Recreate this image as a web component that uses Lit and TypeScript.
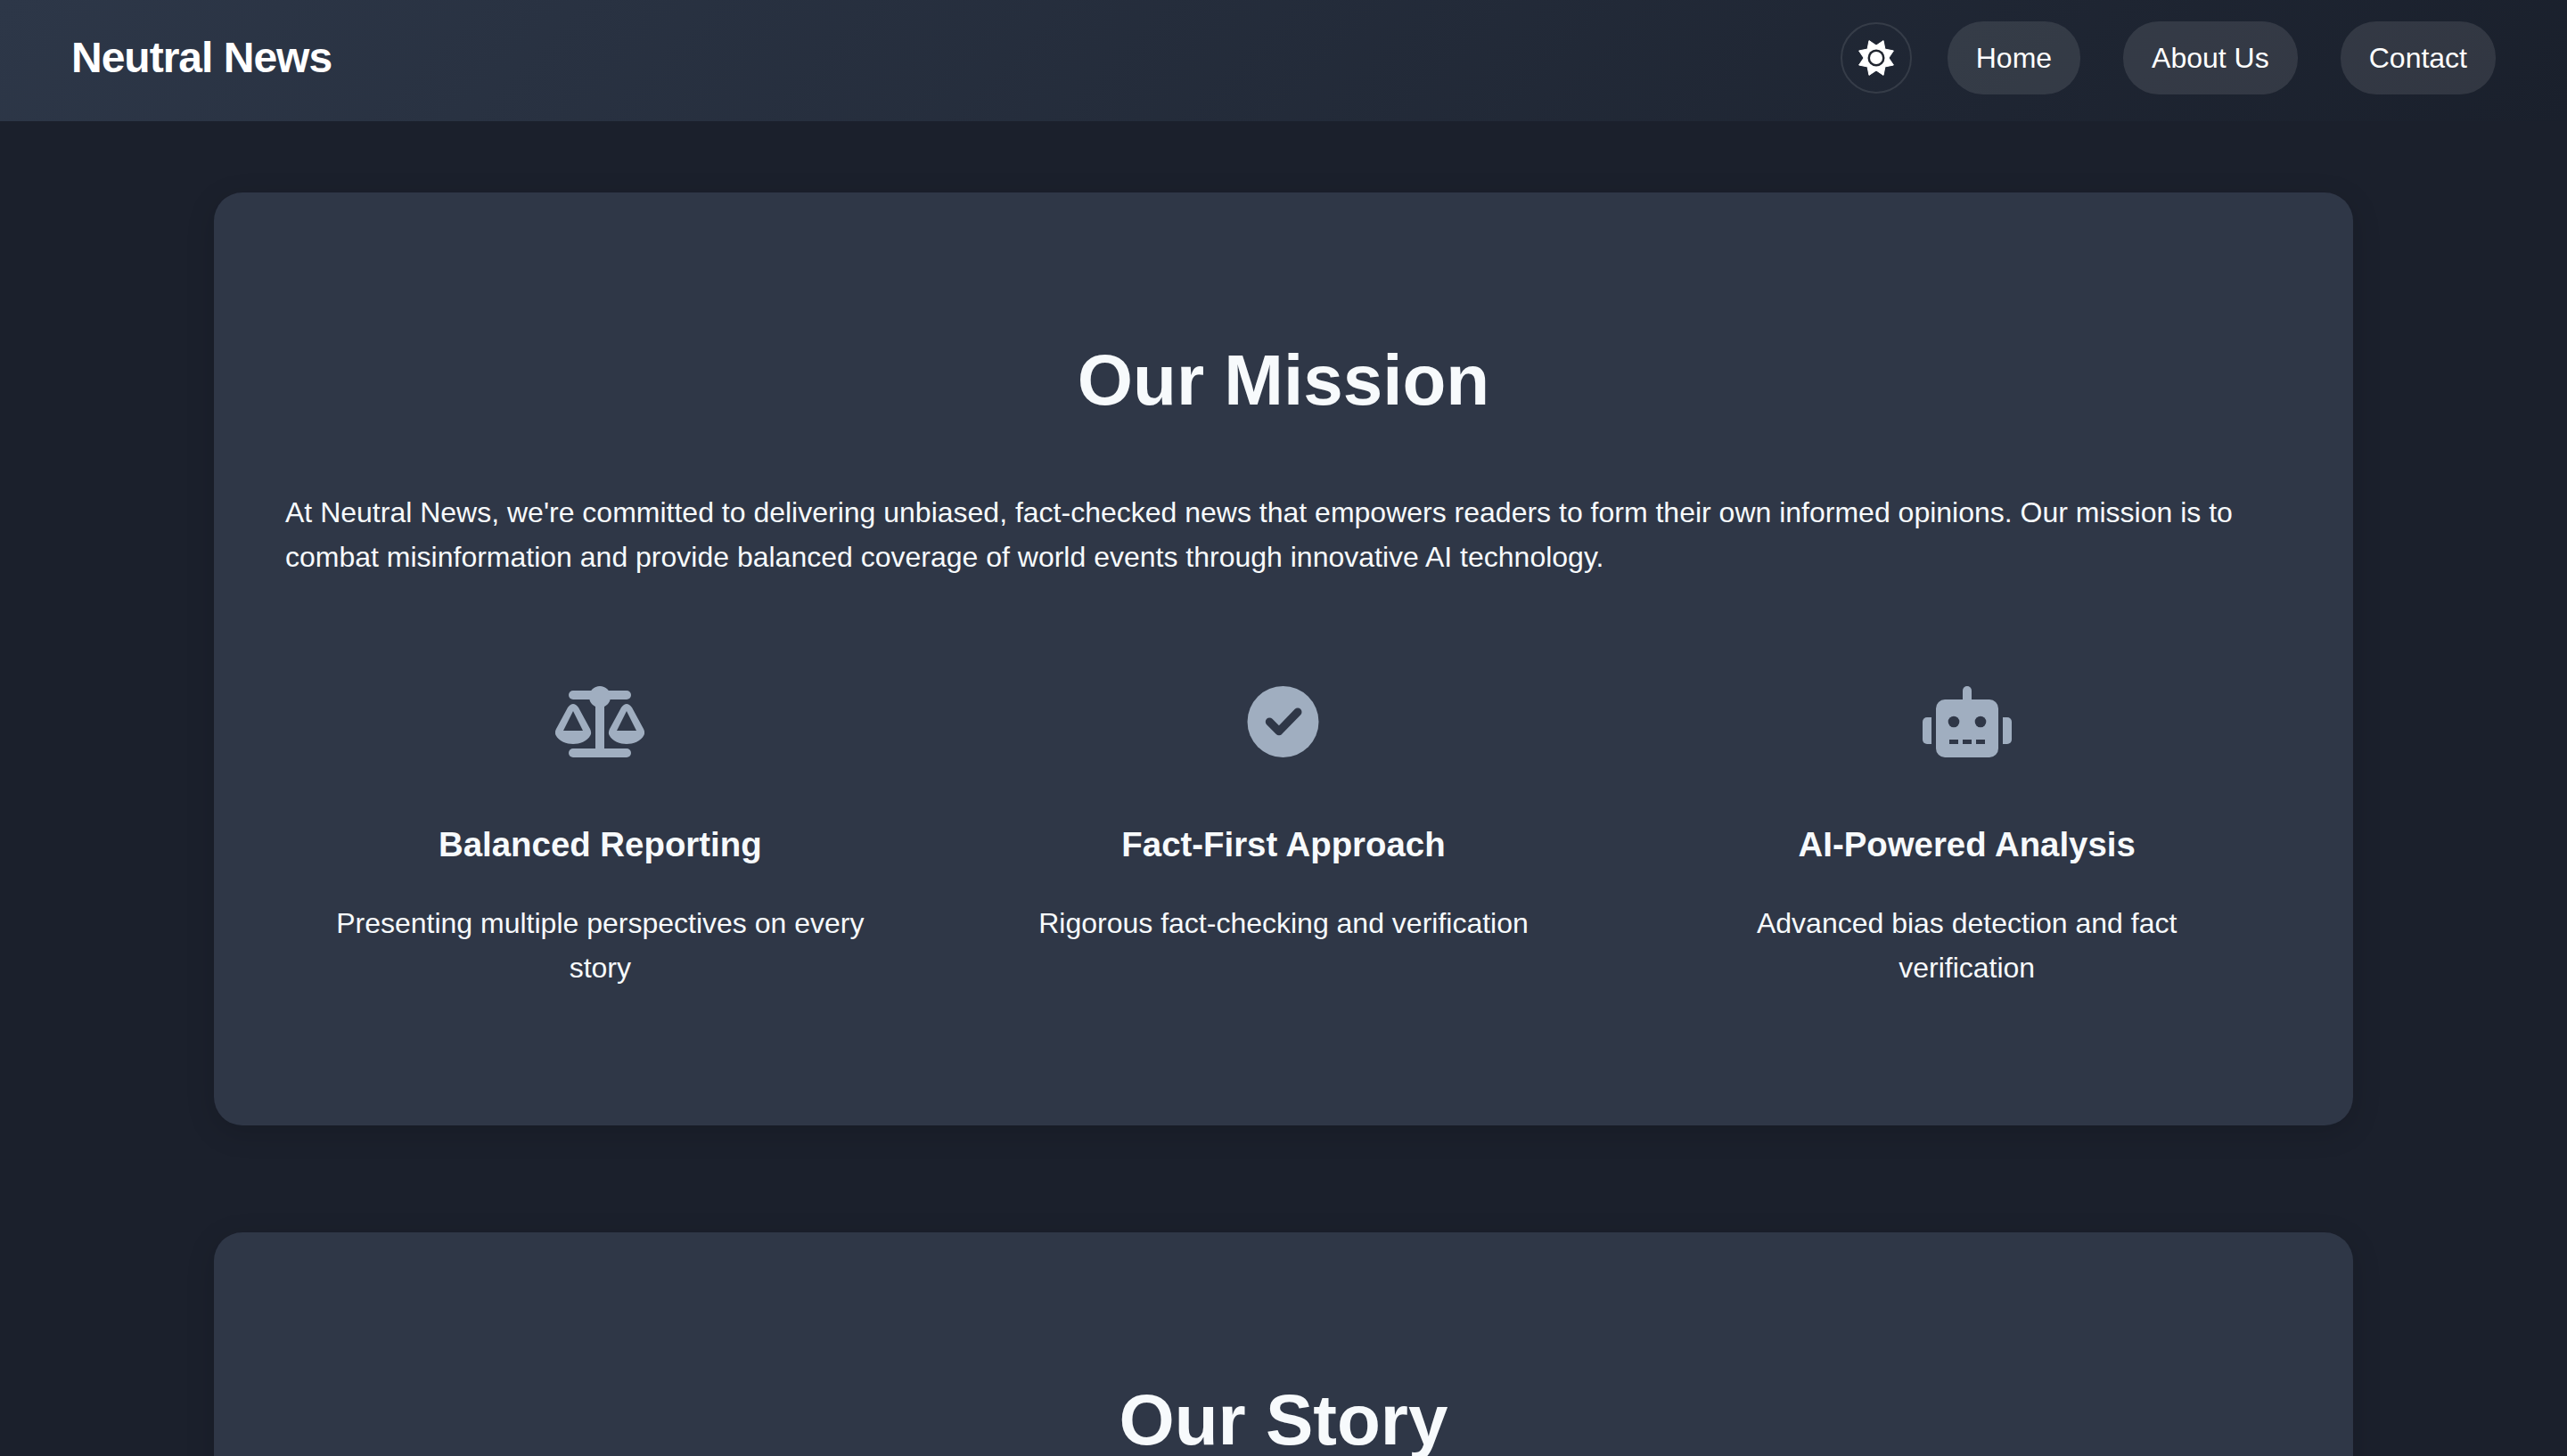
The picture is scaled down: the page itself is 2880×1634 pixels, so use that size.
import { LitElement, html, css, svg } from 'lit';
import { customElement } from 'lit/decorators.js';

// 8 point star for the theme toggle, peaks offset from vertical
function sunPoints(cx: number, cy: number, outer: number, inner: number): string {
  const pts: string[] = [];
  for (let i = 0; i < 16; i++) {
    const r = i % 2 === 0 ? outer : inner;
    const a = ((i * 22.5 + 22.5) * Math.PI) / 180;
    pts.push(`${(cx + r * Math.sin(a)).toFixed(2)},${(cy - r * Math.cos(a)).toFixed(2)}`);
  }
  return pts.join(' ');
}

const sunIcon = html`<svg class="sun" viewBox="0 0 44 44" width="44" height="44">
  <polygon points=${sunPoints(22, 22, 21, 14)} fill="#fff" stroke="#fff" stroke-width="1" stroke-linejoin="round"></polygon>
  <circle cx="22" cy="22" r="9.5" fill="#20252f"></circle>
  <circle cx="22" cy="22" r="7" fill="#fff"></circle>
</svg>`;

const scaleIcon = html`<svg class="icon" viewBox="0 0 100 80" width="100" height="80">
  <rect x="15" y="5" width="70" height="10" rx="5" fill="#a0aec0"></rect>
  <circle cx="50" cy="12" r="12" fill="#a0aec0"></circle>
  <rect x="45" y="14" width="10" height="60" fill="#a0aec0"></rect>
  <rect x="15" y="70" width="70" height="10" rx="5" fill="#a0aec0"></rect>
  ${[20, 80].map(
    (x) => svg`<path fill="#a0aec0" fill-rule="evenodd" d="M${x - 6} 24 Q${x} 16 ${x + 6} 24 L${x + 19} 48 Q${x + 21} 52 ${x + 19.5} 55 C${x + 16} 62 ${x + 7} 65 ${x} 65 C${x - 7} 65 ${x - 16} 62 ${x - 19.5} 55 Q${x - 21} 52 ${x - 19} 48 Z M${x} 28 L${x - 11} 50 L${x + 11} 50 Z"></path>`
  )}
</svg>`;

const checkIcon = html`<svg class="icon" viewBox="0 0 100 80" width="100" height="80">
  <circle cx="49.5" cy="40" r="40" fill="#a0aec0"></circle>
  <path d="M34.3 40 L45 50.7 L66 29" fill="none" stroke="#2f3747" stroke-width="9" stroke-linecap="round" stroke-linejoin="round"></path>
</svg>`;

const robotIcon = html`<svg class="icon" viewBox="0 0 100 80" width="100" height="80">
  <rect x="45" y="0" width="10" height="20" rx="5" fill="#a0aec0"></rect>
  <rect x="15" y="15" width="70" height="65" rx="10" fill="#a0aec0"></rect>
  <path d="M10 35 H5 a5 5 0 0 0 -5 5 v20 a5 5 0 0 0 5 5 h5 Z" fill="#a0aec0"></path>
  <path d="M90 35 h5 a5 5 0 0 1 5 5 v20 a5 5 0 0 1 -5 5 h-5 Z" fill="#a0aec0"></path>
  <circle cx="35" cy="40" r="6.3" fill="#2f3747"></circle>
  <circle cx="65" cy="40" r="6.3" fill="#2f3747"></circle>
  <rect x="30" y="60" width="10" height="5" fill="#2f3747"></rect>
  <rect x="45" y="60" width="10" height="5" fill="#2f3747"></rect>
  <rect x="60" y="60" width="10" height="5" fill="#2f3747"></rect>
</svg>`;

const features = [
  { icon: scaleIcon, title: 'Balanced Reporting', text: 'Presenting multiple perspectives on every story' },
  { icon: checkIcon, title: 'Fact-First Approach', text: 'Rigorous fact-checking and verification' },
  { icon: robotIcon, title: 'AI-Powered Analysis', text: 'Advanced bias detection and fact verification' },
];

@customElement('app-root')
export class AppRoot extends LitElement {
  static styles = css`
    :host {
      display: block;
      height: 100vh;
      overflow: hidden;
      background: #1b202c;
      color: #f7fafc;
      font-family: 'Liberation Sans', Arial, sans-serif;
      font-size: 32px;
      line-height: 50px;
    }
    header {
      display: flex;
      align-items: center;
      justify-content: space-between;
      height: 136px;
      padding: 0 80px 6px;
      box-sizing: border-box;
      background: linear-gradient(135deg, #2d3748, #1a202c);
      color: #fff;
    }
    .logo {
      font-size: 48px;
      font-weight: 700;
      letter-spacing: -1px;
    }
    nav {
      display: flex;
      align-items: center;
      gap: 48px;
    }
    .toggle {
      display: flex;
      align-items: center;
      justify-content: center;
      width: 80px;
      height: 80px;
      margin-right: -8px;
      box-sizing: border-box;
      border: 2px solid rgba(255, 255, 255, 0.1);
      border-radius: 50%;
    }
    .link {
      padding: 16px 32px;
      border-radius: 40px;
      background: rgba(255, 255, 255, 0.1);
    }
    main {
      display: flex;
      flex-direction: column;
      align-items: center;
      gap: 120px;
      padding-top: 80px;
    }
    .card {
      width: 2400px;
      box-sizing: border-box;
      padding: 165px 80px 120px;
      border-radius: 32px;
      background: #2f3747;
      box-shadow: 0 8px 32px rgba(0, 0, 0, 0.15);
    }
    h2 {
      margin: 0 0 77px;
      font-size: 80px;
      line-height: 92px;
      font-weight: 700;
      text-align: center;
    }
    .intro {
      margin: 0 0 88px;
    }
    .features {
      display: grid;
      grid-template-columns: repeat(3, 1fr);
      gap: 60px;
    }
    .feature {
      display: flex;
      flex-direction: column;
      align-items: center;
      padding: 32px 40px;
      text-align: center;
    }
    .icon {
      display: block;
      margin-bottom: 75px;
    }
    h3 {
      margin: 0 0 40px;
      font-size: 38.4px;
      line-height: 46px;
      font-weight: 700;
    }
    .feature p {
      margin: 0;
    }
  `;

  render() {
    return html`
      <header>
        <div class="logo">Neutral News</div>
        <nav>
          <div class="toggle">${sunIcon}</div>
          <div class="link">Home</div>
          <div class="link">About Us</div>
          <div class="link">Contact</div>
        </nav>
      </header>
      <main>
        <section class="card">
          <h2>Our Mission</h2>
          <p class="intro">
            At Neutral News, we're committed to delivering unbiased, fact-checked news that empowers readers to form
            their own informed opinions. Our mission is to combat misinformation and provide balanced coverage of world
            events through innovative AI technology.
          </p>
          <div class="features">
            ${features.map(
              (f) => html`<div class="feature">${f.icon}<h3>${f.title}</h3><p>${f.text}</p></div>`
            )}
          </div>
        </section>
        <section class="card">
          <h2>Our Story</h2>
        </section>
      </main>
    `;
  }
}
